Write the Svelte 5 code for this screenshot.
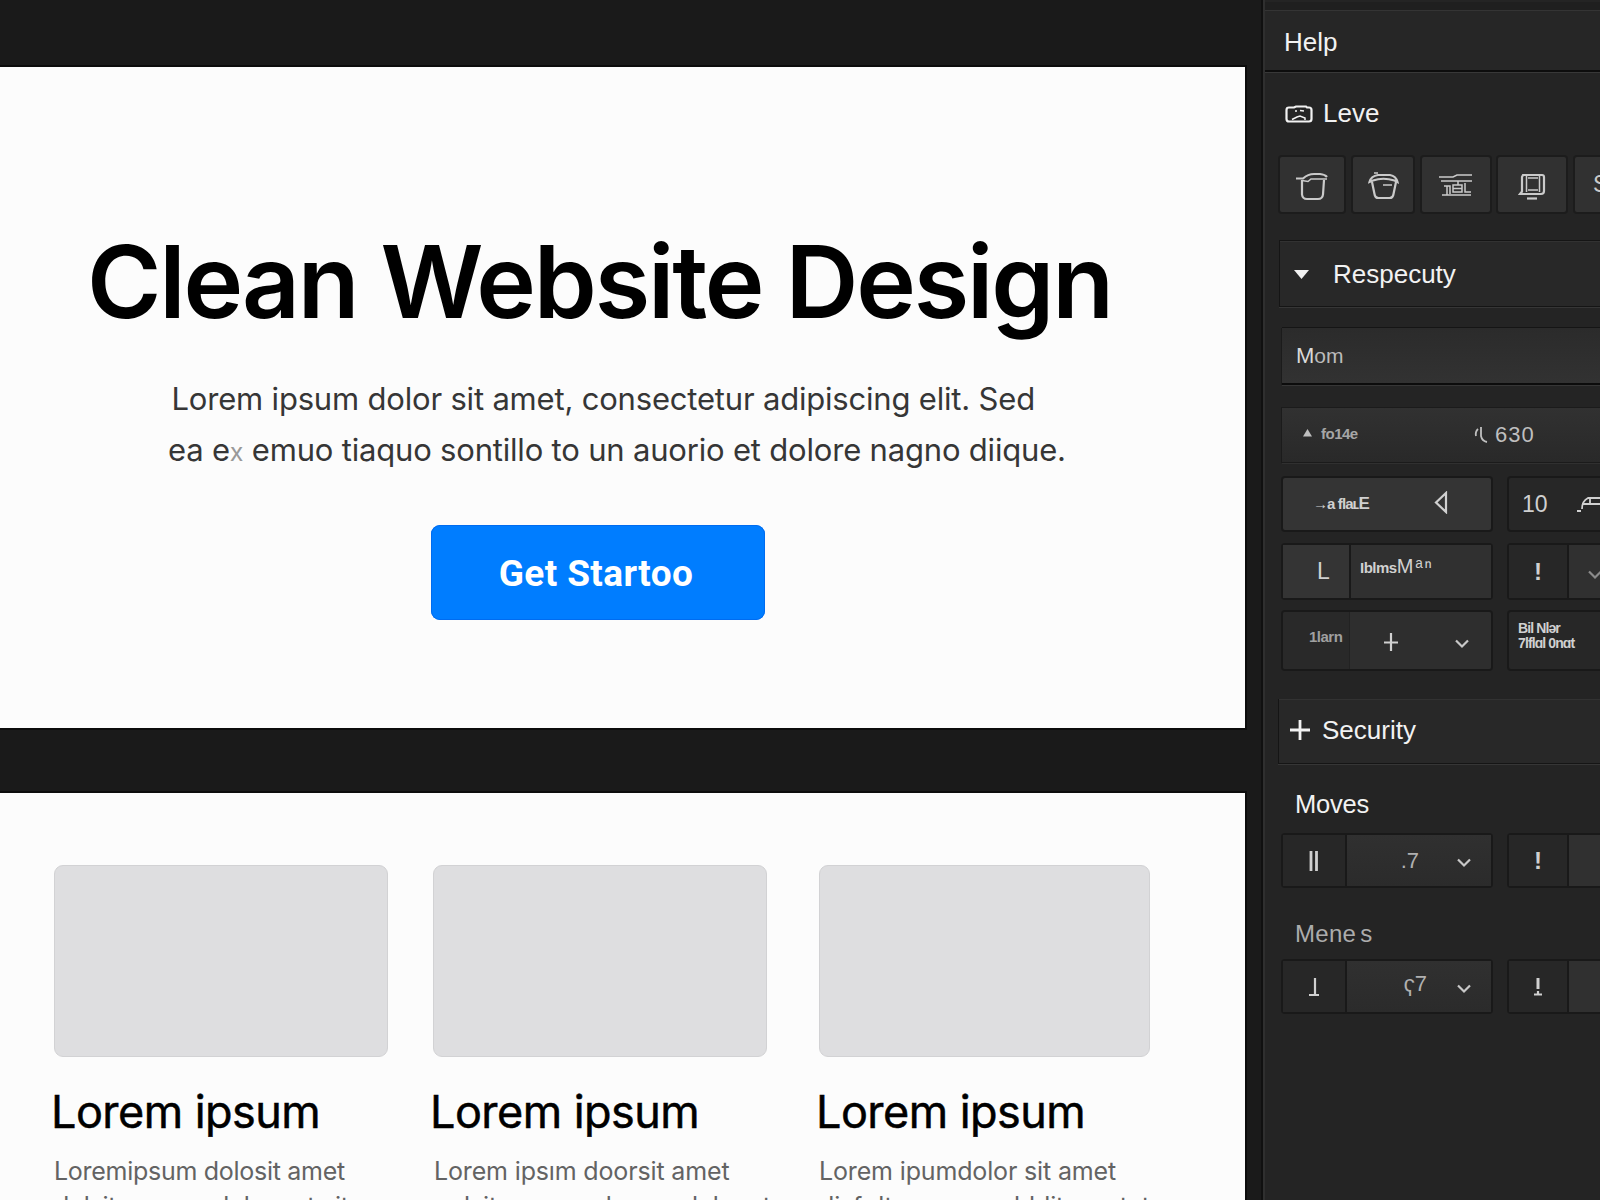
<script lang="ts">
	interface Card {
		title: string;
		line: string;
		more: string;
	}

	const cards: Card[] = [
		{ title: "Lorem ipsum", line: "Loremipsum dolosit amet", more: "dolsit amsum dolor set sit" },
		{ title: "Lorem ipsum", line: "Lorem ipsım doorsit amet", more: "a dsitums um dosum dolor st" },
		{ title: "Lorem ipsum", line: "Lorem ipumdolor sit amet", more: "disf dt sumo m ubldit amstet" },
	];
</script>

{#snippet chevron()}
	<svg class="chevron" width="14" height="10" viewBox="0 0 14 10"><path d="M1 1.500l6 6 6-6" /></svg>
{/snippet}

<div class="app">
	<main class="canvas">
		<section class="hero">
			<h1>Clean Website Design</h1>
			<p class="lead first">Lorem ipsum dolor sit amet, consectetur adipiscing elit. Sed</p>
			<p class="lead second">ea e<span class="faint">x</span> emuo tiaquo sontillo to un auorio et dolore nagno diique.</p>
			<button class="cta">Get Startoo</button>
		</section>
		<section class="features">
			{#each cards as card}
				<article class="card">
					<div class="thumb"></div>
					<h2>{card.title}</h2>
					<p>{card.line}<br />{card.more}</p>
				</article>
			{/each}
		</section>
	</main>

	<aside class="panel">
		<header class="menu">Help</header>
		<div class="level">
			<svg width="28" height="20" viewBox="0 0 28 20" stroke-width="2.6">
				<path d="M4 3.500h5l2-1h10l1 1h2q2.500 0 2.500 2.500v9q0 2.500-2.500 2.500H4q-2.500 0-2.500-2.500V6Q1.500 3.500 4 3.500z" />
				<path d="M7 15.500l5-2.500 3-1 5 2v2M10 7h2M15 6.500l4 .500" stroke-width="1.500" />
			</svg>
			<span>Leve</span>
		</div>

		<div class="tools">
			<button class="tool t1">
				<svg width="32" height="29" viewBox="0 0 32 29">
					<path d="M0 6.500h7Q12 2 18 2h6q5 .500 7 3" /><path d="M6 8.500l6 1 3-2.500h16" stroke-width="1.600" />
					<path d="M6 8v14.500q.500 4.500 5 4.500h11q4.500 0 5-4.500L28 8" />
				</svg>
			</button>
			<button class="tool t2">
				<svg width="31" height="28" viewBox="0 0 31 28">
					<path d="M1.500 10Q3 4 10 3h12q6 1 7.500 7l-3-1.500Q15 5 5 8.500z" />
					<path d="M4 10l2.500 12q.500 4 4 4h11q3.500 0 4-4L28 10" /><path d="M15 13h9M6 1h4" stroke-width="1.400" />
				</svg>
			</button>
			<button class="tool t3">
				<svg class="thin" width="34" height="24" viewBox="0 0 34 24">
					<path d="M0 3h14l4-2h15M2 7h31M8 12v9M5 12h6v8M14 11h9v7h-9zM14 14.500h9M19 7v4M26 9v9h6M3 21h29" />
				</svg>
			</button>
			<button class="tool t4">
				<svg width="28" height="28" viewBox="0 0 28 28">
					<path d="M5 2h19q2 0 2 2v14q0 3-3 3H2l2-2.500V4z" />
					<path d="M8.500 3v16M21.500 3v16M10 5h10M10 17h10" stroke-width="1.500" /><path d="M9 25.500h10" />
				</svg>
			</button>
			<button class="tool t5">S</button>
		</div>

		<div class="section open">
			<svg width="15" height="9" viewBox="0 0 15 9"><path class="solid" d="M0 0h15L7.500 9z" /></svg>
			<span>Respecuty</span>
		</div>

		<div class="input">M<small>om</small></div>

		<div class="strip">
			<svg width="9" height="8" viewBox="0 0 9 8"><path class="solid" d="M4.500 0L9 7.500H0z" /></svg>
			<span class="tiny">fo14e</span>
			<svg class="hook" width="16" height="18" viewBox="0 0 16 18"><path d="M4 3q-3 3-2 7M7 1v9q1 5 6 6" /></svg>
			<span class="value">630</span>
		</div>

		<div class="row row-a">
			<div class="field bright">
				<span class="tiny type">→a flaʟ<b>E</b></span>
				<svg class="back" width="14" height="23" viewBox="0 0 14 23"><path d="M12 2v19L2 11.500z" /></svg>
			</div>
			<div class="field dark side">
				<span class="ten">10</span>
				<svg class="slant" width="30" height="18" viewBox="0 0 30 18"><path d="M0 16h4M5 14q0-8 6-11h15M5 9h21M13 3v6" stroke-width="1.800" /></svg>
			</div>
		</div>

		<div class="row row-b">
			<div class="field split">
				<div class="cell bright"><span class="ell">L</span></div>
				<div class="cell"><span class="tiny mess">Iblms<big>Mᵃⁿ</big></span></div>
			</div>
			<div class="field split side">
				<div class="cell dark mark"><b>!</b></div>
				<div class="cell tail">{@render chevron()}</div>
			</div>
		</div>

		<div class="row row-c">
			<div class="field seam">
				<span class="tiny term">1larn</span>
				<svg class="plus" width="16" height="20" viewBox="0 0 16 20"><path d="M8 1v18M1 10.500h14" /></svg>
				{@render chevron()}
			</div>
			<div class="field dark side stack"><span>Bil Nlər</span><span>7lflɑl 0nɑt</span></div>
		</div>

		<div class="section closed">
			<svg width="20" height="20" viewBox="0 0 20 20"><path d="M10 0v20M0 10h20" stroke-width="2.800" /></svg>
			<span>Security</span>
		</div>

		<h3 class="moves">Moves</h3>
		<div class="row pair">
			<div class="field split">
				<div class="cell dark mark"><svg width="10" height="20" viewBox="0 0 10 20"><path d="M2 0v20M7.500 0v20" stroke-width="2.800" /></svg></div>
				<div class="cell number"><span>.7</span>{@render chevron()}</div>
			</div>
			<div class="field split side">
				<div class="cell dark mark"><b>!</b></div>
				<div class="cell"></div>
			</div>
		</div>

		<h3 class="menes">Mene<span>s</span></h3>
		<div class="row pair low">
			<div class="field split">
				<div class="cell dark mark"><svg width="12" height="20" viewBox="0 0 12 20"><path d="M7 1v17M1 18h10" /></svg></div>
				<div class="cell number"><span>ҁ7</span>{@render chevron()}</div>
			</div>
			<div class="field split side">
				<div class="cell dark mark"><svg width="10" height="20" viewBox="0 0 10 20"><path d="M5 1v11" stroke-width="3" /><path d="M1 17.500h8M5 14v3" /></svg></div>
				<div class="cell"></div>
			</div>
		</div>
	</aside>
</div>

<style>
	:global(body) {
		background: #1a1a1a;
		overflow: hidden;
	}

	.app {
		display: flex;
		width: 1600px;
		height: 1200px;
		overflow: hidden;
		box-sizing: border-box;
		background: #1a1a1a;
		font-family: "Liberation Sans", Arial, sans-serif;
	}

	.app * {
		box-sizing: border-box;
	}

	button {
		font: inherit;
		border: 0;
		padding: 0;
	}

	h1, h2, h3, p {
		margin: 0;
		font-weight: 400;
		white-space: nowrap;
	}

	/* Canvas */
	.canvas {
		width: 1263px;
		flex-shrink: 0;
		padding-top: 67px;
		display: flex;
		flex-direction: column;
		gap: 65px;
		font-family: Inter, sans-serif;
	}

	.hero, .features {
		width: 1245px;
		flex-shrink: 0;
		background: #fcfcfc;
		box-shadow: 0 0 0 2px #0c0c0c;
	}

	.hero {
		height: 661px;
		display: flex;
		flex-direction: column;
		align-items: flex-start;
	}

	h1 {
		margin: 154px 0 0 87px;
		font-size: 101px;
		line-height: 120px;
		font-weight: 600;
		letter-spacing: -2.2px;
		color: #000;
	}

	.lead {
		font-size: 31px;
		line-height: 51px;
		letter-spacing: -0.19px;
		color: #363636;
	}

	.first {
		margin: 32px 0 0 171.5px;
	}

	.second {
		margin-left: 168px;
	}

	.faint {
		color: #999;
		font-size: 25px;
	}

	.cta {
		width: 334px;
		height: 95px;
		margin: 47px 0 0 431px;
		padding: 2px 4px 0 0;
		border-radius: 9px;
		background: #007dff;
		box-shadow: inset 0 0 0 1px #006cf0;
		color: #fff;
		font: 700 37px/93px Roboto, sans-serif;
		letter-spacing: 0.4px;
	}

	.features {
		height: 500px;
		padding: 72px 0 0 54px;
		display: flex;
		align-items: flex-start;
	}

	.card {
		width: 334px;
		margin-right: 45px;
		flex-shrink: 0;
	}

	.card:nth-child(2) {
		margin-right: 52px;
	}

	.card:nth-child(3) {
		width: 331px;
		margin-right: 0;
	}

	.thumb {
		height: 192px;
		border-radius: 9px;
		background: #dedee0;
		border: 1px solid #d2d2d4;
	}

	h2 {
		margin: 27px 0 0 -3px;
		font-size: 45px;
		line-height: 56px;
		letter-spacing: -0.55px;
		color: #000;
		-webkit-text-stroke: 0.5px #000;
	}

	.card p {
		font-size: 25px;
		line-height: 35px;
		letter-spacing: -0.15px;
		margin-top: 14px;
		color: #636363;
	}

	.card:first-child p {
		letter-spacing: -0.28px;
	}

	.card:nth-child(2) p {
		margin-left: 1px;
	}

	/* Side panel */
	.panel {
		width: 337px;
		height: 1200px;
		overflow: hidden;
		border-left: 2px solid #2f2f2f;
		box-shadow: -2px 0 0 #101010;
		background: #242424;
		color: #f2f2f2;
		font-size: 26px;
		display: flex;
		flex-direction: column;
	}

	.panel > * {
		flex-shrink: 0;
	}

	svg {
		display: block;
		flex-shrink: 0;
		fill: none;
		stroke: currentColor;
		stroke-width: 2.2;
	}

	svg .solid {
		fill: currentColor;
		stroke: none;
	}

	.menu {
		height: 62px;
		margin-top: 10px;
		padding-left: 19px;
		line-height: 62px;
		border-top: 1px solid #343434;
		border-bottom: 2px solid #0d0d0d;
		background: #262626;
		box-shadow: 0 1px 0 #383838, 0 -8px 0 #1f1f1f;
	}

	.level {
		height: 85px;
		padding: 0 0 2px 20px;
		display: flex;
		align-items: center;
		gap: 10px;
	}

	.tools {
		display: flex;
		height: 55px;
		padding-left: 15px;
	}

	.tool {
		display: flex;
		align-items: center;
		justify-content: center;
		flex-shrink: 0;
		padding-top: 3px;
		color: #cacaca;
		background: #313131;
		border-radius: 2px;
		box-shadow: 0 0 0 2px #1c1c1c;
	}

	.t1 { width: 64px; margin-right: 9px; }
	.t2 { width: 60px; margin-right: 9px; }
	.t3 { width: 68px; margin-right: 8px; }
	.t4 { width: 68px; margin-right: 9px; padding-top: 5px; }
	.t5 { width: 68px; justify-content: flex-start; padding: 0 0 0 18px; font-size: 23px; }

	.thin {
		stroke-width: 1.5;
	}

	.section {
		display: flex;
		align-items: center;
		border: 1px solid #151515;
		border-right: 0;
		background: #282828;
		box-shadow: 0 1px 0 #363636, inset 0 1px 0 #323232;
	}

	.open {
		height: 67px;
		margin: 28px 0 0 14px;
		padding: 2px 0 0 14px;
		gap: 24px;
	}

	.input {
		height: 57px;
		margin: 21px 0 0 17px;
		padding-left: 14px;
		line-height: 56px;
		font-size: 22px;
		color: #dadada;
		border-bottom: 2px solid #0c0c0c;
		background: linear-gradient(#2b2b2b, #323232);
		box-shadow: 0 -1px 0 #151515, -1px 0 0 #1b1b1b, 0 1px 0 #363636;
	}

	.input small {
		font-size: 21px;
		color: #bbb;
	}

	.strip {
		height: 54px;
		margin: 23px 0 0 17px;
		padding-left: 21px;
		display: flex;
		align-items: center;
		color: #bfbfbf;
		background: linear-gradient(#313131, #292929);
		box-shadow: 0 0 0 1px #1b1b1b, 0 2px 0 #303030;
	}

	.strip > svg:first-child {
		margin-bottom: 4px;
	}

	.tiny {
		font-size: 15px;
		font-weight: 700;
		letter-spacing: -0.5px;
		white-space: nowrap;
	}

	.strip .tiny {
		width: 36px;
		margin: 0 117px 4px 9px;
		color: #a6a6a6;
	}

	.hook {
		stroke-width: 1.8;
		margin-right: 5px;
	}

	.value {
		font-size: 22px;
		letter-spacing: 1px;
	}

	.row {
		display: flex;
		gap: 18px;
		margin-left: 18px;
		color: #d0d0d0;
	}

	.field {
		width: 208px;
		height: 100%;
		flex-shrink: 0;
		display: flex;
		align-items: center;
		border-radius: 2px;
		background: #2d2d2d;
		box-shadow: 0 0 0 2px #191919;
	}

	.row-a {
		height: 52px;
		margin-top: 16px;
	}

	.type {
		width: 60px;
		margin-left: 30px;
		letter-spacing: -0.9px;
	}

	.type b {
		font-size: 17px;
	}

	.back {
		margin: 0 0 4px 61px;
	}

	.ten {
		margin-left: 13px;
		font-size: 23px;
	}

	.slant {
		margin-left: 29px;
	}

	.row-b {
		height: 53px;
		margin-top: 15px;
	}

	.cell {
		flex: 1;
		height: 100%;
		display: flex;
		align-items: center;
		background: #303030;
		border-left: 2px solid #191919;
	}

	.cell:first-child {
		flex: 0 0 66px;
		border-left: 0;
	}

	.bright {
		background: #343434;
	}

	.dark {
		background: #272727;
	}

	.ell {
		margin-left: 34px;
		font-size: 23px;
	}

	.mess {
		margin: 0 0 11px 9px;
	}

	.mess big {
		font-size: 20px;
		font-weight: 400;
		letter-spacing: 1.8px;
	}

	.field .mark:first-child {
		flex-basis: 62px;
		justify-content: center;
	}

	.side .mark:first-child {
		flex-basis: 58px;
	}

	.mark b {
		font-size: 24px;
	}

	.chevron {
		color: #c8c8c8;
	}

	.tail .chevron {
		margin: 7px 0 0 19px;
		color: #8b8b8b;
	}

	.row-c {
		height: 57px;
		margin-top: 14px;
	}

	.seam {
		background: linear-gradient(90deg, #292929 66px, #222 66px 67px, #2e2e2e 67px);
	}

	.term {
		width: 36px;
		margin: 0 0 8px 26px;
		color: #a0a0a0;
	}

	.plus {
		margin: 2px 56px 0 38px;
	}

	.row-c .chevron {
		margin-top: 6px;
	}

	.stack {
		flex-direction: column;
		align-items: flex-start;
		padding: 9px 0 0 9px;
		font-size: 14px;
		font-weight: 700;
		line-height: 15px;
		letter-spacing: -0.9px;
		white-space: nowrap;
	}

	.closed {
		height: 65px;
		margin: 30px 0 0 13px;
		padding: 0 0 2px 11px;
		gap: 12px;
		border-top: 0;
	}

	h3 {
		margin-left: 30px;
		font-size: 25.5px;
		line-height: 30px;
	}

	.moves {
		margin-top: 25px;
		letter-spacing: -0.2px;
	}

	.pair {
		height: 51px;
		margin-top: 16px;
	}

	.number {
		padding-right: 20px;
		justify-content: flex-end;
		background: linear-gradient(#303030, #2b2b2b);
		color: #b0b0b0;
		font-size: 22px;
	}

	.number span {
		margin-right: 38px;
	}

	.number .chevron {
		margin-top: 5px;
	}

	.menes {
		margin-top: 33px;
		font-size: 24px;
		letter-spacing: 0.3px;
		color: #acacac;
	}

	.menes span {
		margin-left: 4px;
	}

	.low {
		margin-top: 12px;
	}

	.low .number span {
		margin: 0 30px 6px 0;
	}
</style>
